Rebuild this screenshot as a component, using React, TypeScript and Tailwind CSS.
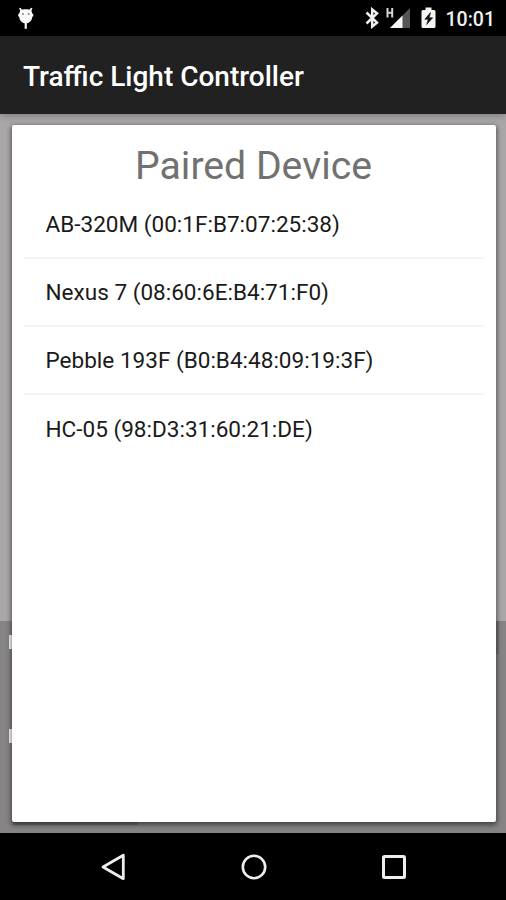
import React from "react";

type Device = {
  name: string;
  address: string;
};

const devices: Device[] = [
  { name: "AB-320M", address: "00:1F:B7:07:25:38" },
  { name: "Nexus 7", address: "08:60:6E:B4:71:F0" },
  { name: "Pebble 193F", address: "B0:B4:48:09:19:3F" },
  { name: "HC-05", address: "98:D3:31:60:21:DE" },
];

const DebugIcon = () => (
  <svg width="18" height="24" viewBox="0 0 18 24" fill="none">
    <path
      d="M4 4.500 2.900 2M13.500 4.500l1.100-2.500"
      stroke="#f5f5f5"
      strokeWidth="1.800"
    />
    <path
      d="M3.400 3.800C5.500 3 12 3 14.100 3.800L15.300 7.500l1 .7v2l-1 .5C15 14.800 12.200 17.300 8.750 17.300S2.600 14.800 2.200 10.700l-1-.5v-2l1-.7z"
      fill="#fafafa"
    />
    <circle cx="6" cy="8" r="1" fill="#888" />
    <circle cx="11.700" cy="8" r="1" fill="#888" />
    <path d="M8.750 16v6.800" stroke="#f5f5f5" strokeWidth="2.200" />
  </svg>
);

const BluetoothIcon = () => (
  <svg width="14" height="22" viewBox="0 0 14 22" fill="none">
    <path
      d="M1.500 5.500 12 15.600 7.200 19.500V2.500L12 6.400 1.500 16.500"
      stroke="#f0f0f0"
      strokeWidth="2.500"
    />
  </svg>
);

const SignalIcon = () => (
  <svg width="25" height="22" viewBox="0 0 25 22" fill="none">
    <path d="M24 1v20H4z" fill="#555" />
    <path d="M16.500 8.500V21H4z" fill="#f5f5f5" />
    <path
      d="M1.500 1v9.500M6.200 1v9.500M1.500 5.700h4.700"
      stroke="#d5d5d5"
      strokeWidth="2"
    />
  </svg>
);

const BatteryIcon = () => (
  <svg width="16" height="22" viewBox="0 0 16 22">
    <path
      d="M4.500.5h6V3H13q1.500 0 1.500 1.500v15Q14.500 21 13 21H2Q.5 21 .5 19.500v-15Q.5 3 2 3h2.500z"
      fill="#f5f5f5"
    />
    <path
      d="M9.500 5.500 3.800 12.300h3.400L5.700 17.500l6-6.700H8.200z"
      fill="#111"
      stroke="#111"
      strokeWidth="0.6"
    />
  </svg>
);

const StatusBar = () => (
  <div className="h-9 bg-black flex items-center justify-between pl-[17px] pr-[11px]">
    <DebugIcon />
    <div className="flex items-center">
      <BluetoothIcon />
      <div className="ml-[7px]">
        <SignalIcon />
      </div>
      <div className="ml-[10px]">
        <BatteryIcon />
      </div>
      <span className="ml-[9px] mt-[3px] text-[19.500px] leading-6 font-medium text-[#f0f0f0]">
        10:01
      </span>
    </div>
  </div>
);

const DeviceList = () => (
  <ul className="mx-3">
    {devices.map((device) => (
      <li
        key={device.address}
        className="h-[68.300px] px-[22px] pt-[2px] flex items-center border-b-2 border-[#f4f4f4] last:border-transparent text-[22.550px] text-[#1a1a1a] whitespace-nowrap"
      >
        {device.name} ({device.address})
      </li>
    ))}
  </ul>
);

const NavigationBar = () => (
  <nav className="h-[67px] bg-black flex items-center justify-center gap-[112px] pl-[2px]">
    <svg width="28" height="28" viewBox="0 0 28 28" fill="none" stroke="#eee">
      <path d="M23.300 2.300v23.400L3 14z" strokeWidth="2.800" strokeLinejoin="round" />
    </svg>
    <svg width="28" height="28" viewBox="0 0 28 28" fill="none" stroke="#eee">
      <circle cx="14" cy="14" r="11.200" strokeWidth="2.600" />
    </svg>
    <svg width="28" height="28" viewBox="0 0 28 28" fill="none" stroke="#eee">
      <rect x="3.500" y="3.500" width="21" height="21" rx="1" strokeWidth="3" />
    </svg>
  </nav>
);

const App = () => {
  return (
    <div className="w-[506px] h-[900px] flex flex-col overflow-hidden font-[Roboto,sans-serif]">
      <StatusBar />
      <header className="relative z-10 h-[78px] bg-[#212121] flex items-center pl-[23px] pt-1 shadow-[0_1px_8px_rgba(0,0,0,0.3)]">
        <h1 className="text-[28px] font-medium text-white whitespace-nowrap">
          Traffic Light Controller
        </h1>
      </header>

      <main className="relative flex-1 flex flex-col bg-[#a9a7a8]">
        <div className="h-[507px]" />
        {/* Log area behind the popup, only its edges stay visible */}
        <div className="flex-1 bg-[#868485] flex justify-between">
          <div className="flex flex-col pt-[14px] pl-[9px]">
            <div className="w-8 h-[14px] bg-white" />
            <div className="mt-[80px] w-8 h-[14px] bg-white" />
            <div className="mt-auto mb-[8px] ml-[4px] w-[125px] h-3 bg-[#6c6c6c]" />
          </div>
          <div className="mr-[7px] w-3 h-[33px] bg-[#727272]" />
        </div>

        {/* Device picker popup */}
        <section className="absolute left-[11.500px] right-[10.500px] top-[11px] bottom-[11px] rounded-[2px] bg-white shadow-[0_2px_5px_1px_rgba(0,0,0,0.5)]">
          <h2 className="pt-[17px] h-[65.400px] text-center text-[39.200px] leading-[48px] text-[#717171]">
            Paired Device
          </h2>
          <DeviceList />
        </section>
      </main>

      <NavigationBar />
    </div>
  );
};

export default App;
